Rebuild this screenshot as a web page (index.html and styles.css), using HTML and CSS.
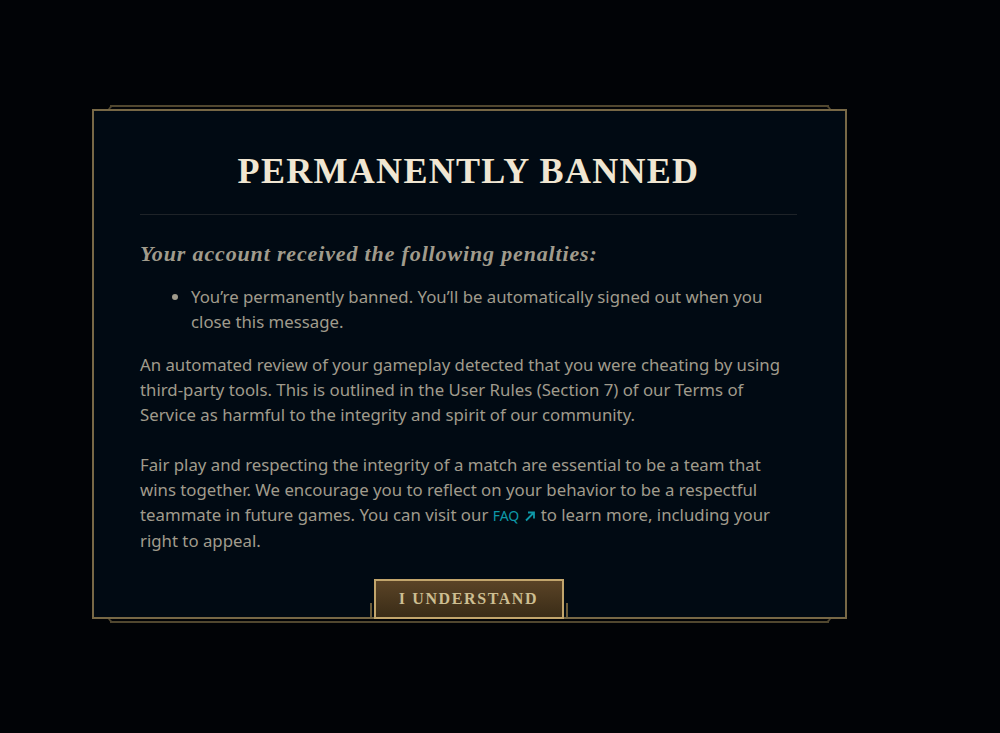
FILE: index.html
```html
<!DOCTYPE html>
<html>

<head>
    <meta charset="UTF-8">
    <meta name="viewport" content="width=device-width, initial-scale=1.0">
    <title>Permanently Banned</title>
    <link rel="stylesheet" href="styles.css">
</head>

<body>
    <div class="page">
        <div class="frame">
            <div class="dialog">
                <h1 class="dialog-title">Permanently Banned</h1>
                <div class="divider"></div>

                <h2 class="penalty-heading">Your account received the following penalties:</h2>
                <ul class="penalty-list">
                    <li>You’re permanently banned. You’ll be automatically signed out when you close this message.</li>
                </ul>

                <p class="dialog-text">An automated review of your gameplay detected that you were cheating by using third-party tools. This is outlined in the User Rules (Section 7) of our Terms of Service as harmful to the integrity and spirit of our community.</p>

                <p class="dialog-text">Fair play and respecting the integrity of a match are essential to be a team that wins together. We encourage you to reflect on your behavior to be a respectful teammate in future games. You can visit our <a class="faq-link" href="#">FAQ<svg class="ext-icon" width="12" height="12" viewBox="0 0 12 12"><path d="M2 10.5 L10 2.5 M4 2.5 H10 V8.5" fill="none" stroke="currentColor" stroke-width="1.8"/></svg></a> to learn more, including your right to appeal.</p>

                <div class="button-row">
                    <button class="confirm-btn" type="button">I Understand</button>
                </div>
            </div>
        </div>
    </div>
</body>

</html>
```

FILE: styles.css
```css
body {
    margin: 0;
    padding: 0;
    background-color: #010306;
    font-family: "Noto Sans", "Liberation Sans", sans-serif;
    color: #a09b8c;
}

.page {
    padding: 105px 0 0 92px;
}

/* thin outer lines above and below the box */
.frame {
    width: 755px;
    padding: 4px 0;
    background:
        linear-gradient(#51472f, #51472f) 18px 0 / 719px 2px no-repeat,
        linear-gradient(#51472f, #51472f) 18px 100% / 719px 2px no-repeat;
}

.dialog {
    position: relative;
    width: 657px;
    padding: 0 48px 0 46px;
    background-color: #010a13;
    border: 2px solid #776846;
}

/* bevelled ends of the outer lines */
.dialog::before,
.dialog::after {
    content: "";
    position: absolute;
    left: 14px;
    right: 14px;
    height: 4px;
    background-color: #51472f;
}

.dialog::before {
    top: -6px;
    clip-path: polygon(0 100%, 3px 0, calc(100% - 3px) 0, 100% 100%,
        calc(100% - 2px) 100%, calc(100% - 4px) 2px, 4px 2px, 2px 100%);
}

.dialog::after {
    bottom: -6px;
    clip-path: polygon(0 0, 2px 0, 4px 2px, calc(100% - 4px) 2px,
        calc(100% - 2px) 0, 100% 0, calc(100% - 3px) 100%, 3px 100%);
}

.dialog-title {
    margin: 0;
    padding-top: 40px;
    text-align: center;
    font-family: "Liberation Serif", serif;
    font-size: 36px;
    line-height: 40px;
    font-weight: bold;
    letter-spacing: 1.3px;
    text-transform: uppercase;
    color: #f0e6d2;
}

.divider {
    height: 1px;
    margin-top: 23px;
    background-color: #1e2328;
}

.penalty-heading {
    margin: 25px 0 0;
    font-family: "Liberation Serif", serif;
    font-style: italic;
    font-weight: bold;
    font-size: 22px;
    line-height: 28px;
    letter-spacing: 0.85px;
    color: #a09b8c;
}

.penalty-list {
    margin: 16px 0 0;
    padding-left: 51px;
    font-size: 16.8px;
    line-height: 25px;
}

.dialog-text {
    margin: 18px 0 0;
    font-size: 16.8px;
    line-height: 25px;
}

.dialog-text + .dialog-text {
    margin-top: 25px;
}

.faq-link {
    color: #0e98a8;
    text-decoration: none;
    font-size: 14px;
}

.ext-icon {
    margin-left: 5px;
    vertical-align: -1px;
}

.button-row {
    position: relative;
    display: flex;
    justify-content: center;
    margin-top: 26px;
}

.button-row::before,
.button-row::after {
    content: "";
    position: absolute;
    bottom: 0;
    width: 2px;
    height: 14px;
    background-color: #6a5a38;
}

.button-row::before {
    left: 230px;
}

.button-row::after {
    left: 426px;
}

.confirm-btn {
    width: 190px;
    height: 40px;
    margin-bottom: -2px;
    border: 2px solid #c2a56c;
    background: linear-gradient(to bottom, #5a4326, #3a2c17);
    font-family: "Liberation Serif", serif;
    font-weight: bold;
    font-size: 16px;
    letter-spacing: 1.6px;
    text-transform: uppercase;
    color: #cdbe91;
    cursor: pointer;
}
```
